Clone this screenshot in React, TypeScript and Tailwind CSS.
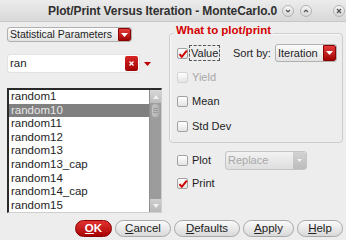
import React from "react";

const FONT = "[font-family:'Liberation_Sans',Arial,sans-serif]";

function RedArrow({ className = "" }: { className?: string }) {
  return (
    <div
      className={`flex items-center justify-center bg-gradient-to-b from-[#e43a3a] to-[#a30000] border border-[#8a0000] ${className}`}
    >
      <svg width="7" height="4" viewBox="0 0 7 4">
        <path d="M0 0h7L3.5 4z" fill="#fff" />
      </svg>
    </div>
  );
}

function Check({ checked, disabled }: { checked?: boolean; disabled?: boolean }) {
  return (
    <div
      className={`relative w-[11px] h-[11px] rounded-[2px] border bg-gradient-to-b from-white to-[#e4e4e4] ${
        disabled ? "border-[#d4d4d4]" : "border-[#a2a2a2]"
      }`}
    >
      {checked && (
        <svg className="absolute left-[0px] top-[0px]" width="10" height="10" viewBox="0 0 10 10">
          <path d="M1.5 5.2l2.3 2.6L8.8 1.6" stroke="#d00000" strokeWidth="2" fill="none" />
        </svg>
      )}
    </div>
  );
}

function Pill({ label, u, w }: { label: string; u: string; w: string }) {
  return (
    <button
      className={`${w} h-[17px] rounded-full border border-[#a8a8a8] bg-gradient-to-b from-[#fafafa] to-[#d9d9d9] text-[11.5px] text-[#222] flex items-center justify-center whitespace-nowrap`}
    >
      <span className="underline underline-offset-1">{u}</span>
      {label}
    </button>
  );
}

function TitleBtn({ kind }: { kind: "down" | "up" | "x" }) {
  return (
    <div className="w-[12px] h-[12px] rounded-full border border-[#b4b4b4] bg-gradient-to-b from-[#f6f6f6] to-[#d6d6d6] flex items-center justify-center">
      <svg width="6" height="6" viewBox="0 0 6 6">
        {kind === "down" && <path d="M1 2l2 2 2-2" stroke="#555" strokeWidth="1.2" fill="none" />}
        {kind === "up" && <path d="M1 4l2-2 2 2" stroke="#555" strokeWidth="1.2" fill="none" />}
        {kind === "x" && <path d="M1 1l4 4M5 1L1 5" stroke="#555" strokeWidth="1.4" fill="none" />}
      </svg>
    </div>
  );
}

const items = [
  "random1",
  "random10",
  "random11",
  "random12",
  "random13",
  "random13_cap",
  "random14",
  "random14_cap",
  "random15",
];

export default function App() {
  return (
    <div className={`w-[346px] h-[240px] bg-[#ededed] overflow-hidden text-[#1e1e1e] whitespace-nowrap ${FONT}`}>
      {/* title bar */}
      <div className="h-[22px] flex items-center bg-gradient-to-b from-[#ececec] to-[#d8d8d8] border-b border-[#c8c8c8]">
        <div className="w-[48px]" />
        <div className="w-[228px] text-[12px] font-bold text-[#303030] tracking-[-0.1px]">
          Plot/Print Versus Iteration - MonteCarlo.0
        </div>
        <div className="ml-[6px] flex items-center gap-[6px]">
          <TitleBtn kind="down" />
          <TitleBtn kind="up" />
        </div>
        <div className="ml-[21px]">
          <TitleBtn kind="x" />
        </div>
      </div>

      <div className="flex pl-[7px] pt-[5px]">
        {/* left column */}
        <div className="w-[155px] flex flex-col">
          <div className="w-[125px] h-[15px] flex rounded-[3px] border border-[#b0b0b0] bg-gradient-to-b from-[#fbfbfb] to-[#e2e2e2] overflow-hidden">
            <div className="flex-1 pl-[2px] text-[10.5px] leading-[13px]">Statistical Parameters</div>
            <RedArrow className="w-[13px] h-full rounded-r-[2px]" />
          </div>

          <div className="mt-[12px] flex items-center">
            <div className="w-[133px] h-[19px] rounded-[3px] bg-white border border-[#e2e2e2] flex items-center pl-[2px]">
              <div className="flex-1 text-[11.5px]">ran</div>
              <div className="w-[13px] h-[15px] mr-[1px] rounded-[2px] bg-gradient-to-b from-[#d92525] to-[#a00000] flex items-center justify-center">
                <svg width="5" height="5" viewBox="0 0 5 5">
                  <path d="M0.5 0.5l4 4M4.5 0.5l-4 4" stroke="#fff" strokeWidth="1.3" />
                </svg>
              </div>
            </div>
            <svg className="ml-[4px]" width="7" height="4" viewBox="0 0 7 4">
              <path d="M0 0h7L3.5 4z" fill="#c00000" />
            </svg>
          </div>

          <div className="mt-[15px] h-[125px] flex bg-white border-t-2 border-l-2 border-[#2a2a2a] border-r border-b border-r-[#cfcfcf] border-b-[#cfcfcf]">
            <div className="flex-1 flex flex-col">
              {items.map((it, i) => (
                <div
                  key={it}
                  className={`h-[13.6px] leading-[13.6px] pl-[2px] text-[11.5px] ${
                    i === 1 ? "bg-[#808080] text-[#e8e8e8]" : ""
                  }`}
                >
                  {it}
                </div>
              ))}
            </div>
            <div className="w-[12px] flex flex-col bg-[#9c9c9c] border-l border-[#8e8e8e]">
              <div className="h-[13px] bg-gradient-to-b from-[#d8d8d8] to-[#bcbcbc] flex items-center justify-center">
                <svg width="6" height="4" viewBox="0 0 6 4">
                  <path d="M3 0l3 4H0z" fill="#f2f2f2" />
                </svg>
              </div>
              <div className="mx-[1px] h-[15px] rounded-[5px] bg-gradient-to-r from-[#c6c6c6] to-[#b0b0b0] border border-[#a4a4a4] flex flex-col items-center justify-center gap-[1px]">
                <div className="w-[5px] h-[1px] bg-[#999]" />
                <div className="w-[5px] h-[1px] bg-[#999]" />
                <div className="w-[5px] h-[1px] bg-[#999]" />
              </div>
              <div className="flex-1" />
              <div className="h-[13px] bg-gradient-to-b from-[#d0d0d0] to-[#b8b8b8] flex items-center justify-center">
                <svg width="6" height="4" viewBox="0 0 6 4">
                  <path d="M0 0h6L3 4z" fill="#f2f2f2" />
                </svg>
              </div>
            </div>
          </div>
        </div>

        {/* right column */}
        <div className="ml-[7px] w-[174px] flex flex-col">
          <div className="relative mt-[6px] h-[110px] rounded-[4px] border border-[#cdcdcd] shadow-[inset_1px_1px_0_#fafafa] pl-[7px]">
            <div className="absolute -top-[10px] left-[4px] px-[2px] bg-[#ededed] text-[11.5px] font-bold text-[#d40000] leading-[13px]">
              What to plot/print
            </div>
            <div className="mt-[11px] h-[16px] flex items-center">
              <Check checked />
              <div className="ml-[1px] h-[16px] w-[31px] pl-[1px] border border-dashed border-[#555] text-[11px] leading-[14px]">
                Value
              </div>
              <div className="ml-[13px] text-[11px]">Sort by:</div>
              <div className="ml-[4px] w-[62px] h-[18px] flex rounded-[3px] border border-[#b0b0b0] bg-gradient-to-b from-[#fbfbfb] to-[#e2e2e2] overflow-hidden">
                <div className="flex-1 pl-[2px] text-[11px] leading-[16px]">Iteration</div>
                <RedArrow className="w-[13px] h-full rounded-r-[2px]" />
              </div>
            </div>
            <div className="mt-[8px] h-[16px] flex items-center gap-[4px]">
              <Check disabled />
              <div className="text-[11px] text-[#a8a8a8]">Yield</div>
            </div>
            <div className="mt-[8.5px] h-[16px] flex items-center gap-[4px]">
              <Check />
              <div className="text-[11px]">Mean</div>
            </div>
            <div className="mt-[8.5px] h-[16px] flex items-center gap-[4px]">
              <Check />
              <div className="text-[11px]">Std Dev</div>
            </div>
          </div>

          <div className="mt-[8px] pl-[8px] h-[19px] flex items-center">
            <Check />
            <div className="ml-[4px] text-[11px]">Plot</div>
            <div className="ml-[14px] w-[82px] h-[19px] flex rounded-[3px] border border-[#c4c4c4] bg-gradient-to-b from-[#f2f2f2] to-[#dedede] overflow-hidden">
              <div className="flex-1 pl-[2px] text-[11px] leading-[17px] text-[#a8a8a8]">Replace</div>
              <div className="w-[13px] h-full bg-gradient-to-b from-[#d2d2d2] to-[#bcbcbc] flex items-center justify-center">
                <svg width="5" height="3" viewBox="0 0 5 3">
                  <path d="M0 0h5L2.5 3z" fill="#f4f4f4" />
                </svg>
              </div>
            </div>
          </div>
          <div className="mt-[5px] pl-[8px] h-[16px] flex items-center">
            <Check checked />
            <div className="ml-[4px] text-[11px]">Print</div>
          </div>
        </div>
      </div>

      {/* buttons */}
      <div className="mt-[7px] flex justify-end pr-[3px] gap-[3px]">
        <button className="w-[37px] h-[17px] rounded-full border border-[#8a0000] bg-gradient-to-b from-[#e33030] to-[#a80000] text-[11.5px] font-bold text-white flex items-center justify-center">
          <span className="underline underline-offset-1">O</span>K
        </button>
        <Pill u="C" label="ancel" w="w-[56px]" />
        <Pill u="D" label="efaults" w="w-[66px]" />
        <Pill u="A" label="pply" w="w-[51px]" />
        <Pill u="H" label="elp" w="w-[46px]" />
      </div>
    </div>
  );
}
